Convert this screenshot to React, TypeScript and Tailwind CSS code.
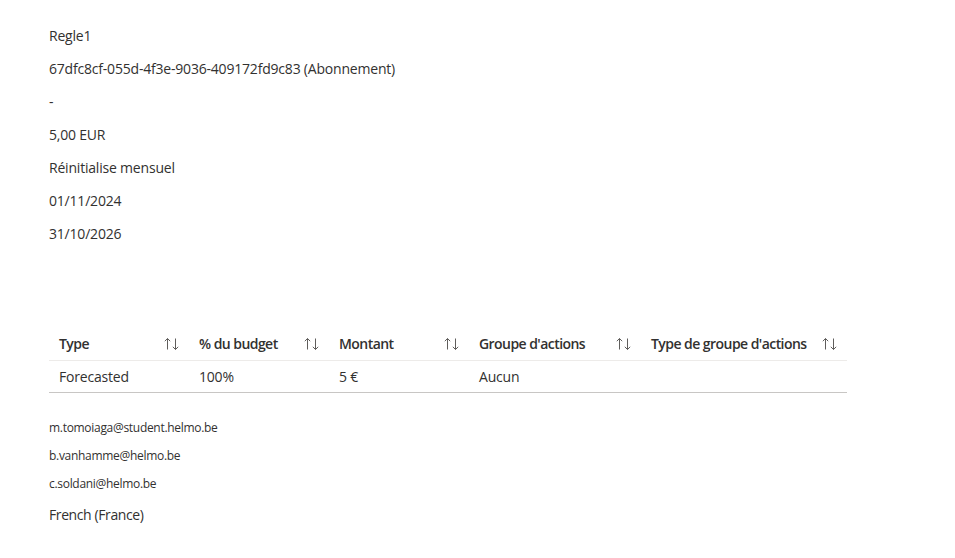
import React from "react";

const font = { fontFamily: '"Open Sans", "Noto Sans", Arial, sans-serif' };

function SortIcon() {
  return (
    <svg width="18" height="14" viewBox="0 0 18 14" fill="none" stroke="#605e5c" strokeWidth="1" className="shrink-0">
      <path d="M4.5 12.5V1.5M1.8 4.2L4.5 1.5L7.2 4.2" />
      <path d="M12.5 1.5V12.5M9.8 9.8L12.5 12.5L15.2 9.8" />
    </svg>
  );
}

const cols = [
  { label: "Type", w: "w-[140px]" },
  { label: "% du budget", w: "w-[140px]" },
  { label: "Montant", w: "w-[140px]" },
  { label: "Groupe d'actions", w: "w-[172px]" },
  { label: "Type de groupe d'actions", w: "w-[206px]" },
];

const row = ["Forecasted", "100%", "5 €", "Aucun", ""];

export default function App() {
  const lines = [
    "Regle1",
    "67dfc8cf-055d-4f3e-9036-409172fd9c83 (Abonnement)",
    "-",
    "5,00 EUR",
    "Réinitialise mensuel",
    "01/11/2024",
    "31/10/2026",
  ];
  return (
    <div className="min-h-[558px] w-[955px] bg-white pl-[49px] pt-[19px] text-[#323130]" style={font}>
      <div className="flex flex-col text-[14px] tracking-[-0.2px]">
        {lines.map((l, i) => (
          <div key={i} className="h-[33px] leading-[33px] whitespace-nowrap">
            {l}
          </div>
        ))}
      </div>
      <div className="mt-[77px] w-[798px] text-[14px]">
        <div className="flex h-[34px] border-b border-[#edebe9]">
          {cols.map((c, i) => (
            <div key={i} className={`${c.w} flex items-center justify-between pl-[10px] pr-[8px] font-semibold tracking-[-0.55px] whitespace-nowrap`}>
              <span>{c.label}</span>
              <SortIcon />
            </div>
          ))}
        </div>
        <div className="flex h-[32px] border-b border-[#c8c6c4] tracking-[-0.2px]">
          {cols.map((c, i) => (
            <div key={i} className={`${c.w} flex items-center pl-[10px] whitespace-nowrap`}>
              {row[i]}
            </div>
          ))}
        </div>
      </div>
      <div className="mt-[21px] flex flex-col text-[12px] tracking-[-0.3px]">
        <div className="h-[28px] leading-[28px]">m.tomoiaga@student.helmo.be</div>
        <div className="h-[28px] leading-[28px]">b.vanhamme@helmo.be</div>
        <div className="h-[28px] leading-[28px]">c.soldani@helmo.be</div>
      </div>
      <div className="h-[33px] text-[14px] leading-[33px] tracking-[-0.4px]">French (France)</div>
    </div>
  );
}
